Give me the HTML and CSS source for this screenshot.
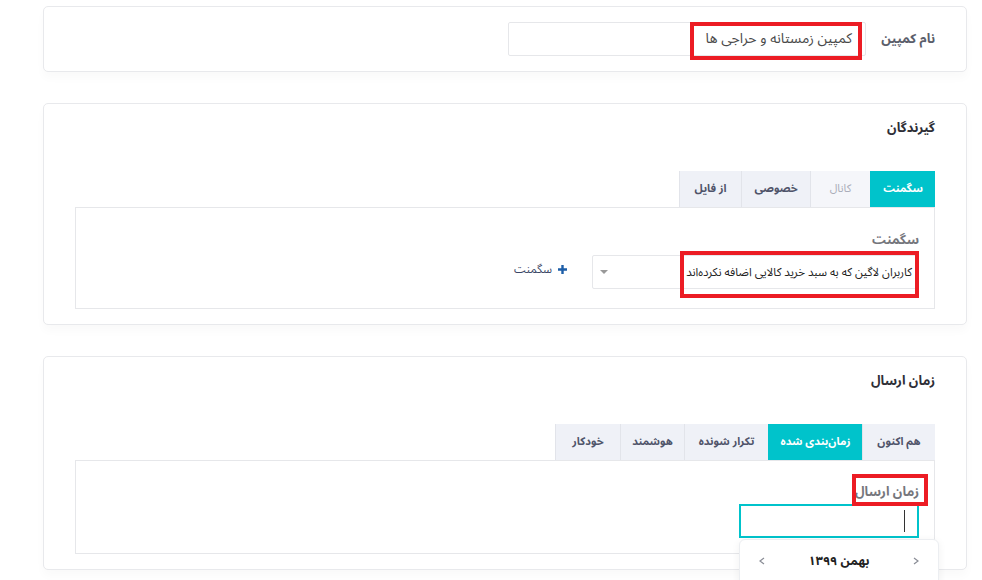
FILE: index.html
```html
<!DOCTYPE html>
<html lang="fa" dir="rtl">
<head>
<meta charset="utf-8">
<link rel="stylesheet" href="styles.css">
</head>
<body>
<div class="page">
  <section class="card card-name">
    <div class="form-row">
      <label class="row-label">نام کمپین</label>
      <div class="text-input">کمپین زمستانه و حراجی ها</div>
    </div>
  </section>

  <section class="card">
    <h3 class="card-title">گیرندگان</h3>
    <div class="tabs">
      <div class="tab active w65">سگمنت</div>
      <div class="tab disabled w60">کانال</div>
      <div class="tab w69">خصوصی</div>
      <div class="tab w62">از فایل</div>
    </div>
    <div class="panel">
      <div class="field-label">سگمنت</div>
      <div class="select-row">
        <div class="select">
          <span class="select-text">کاربران لاگین که به سبد خرید کالایی اضافه نکرده‌اند</span>
          <span class="caret"></span>
        </div>
        <a class="add-link"><span class="plus">
          <svg width="9" height="9" viewBox="0 0 9 9"><path d="M3.3 0h2.4v3.3H9v2.4H5.7V9H3.3V5.7H0V3.3h3.3z" fill="#1d5ea8"/></svg>
        </span>سگمنت</a>
      </div>
    </div>
  </section>

  <section class="card card-time">
    <h3 class="card-title">زمان ارسال</h3>
    <div class="tabs">
      <div class="tab w73">هم اکنون</div>
      <div class="tab active w94">زمان‌بندی شده</div>
      <div class="tab w84">تکرار شونده</div>
      <div class="tab w64">هوشمند</div>
      <div class="tab w65">خودکار</div>
    </div>
    <div class="panel">
      <div class="field-label">زمان ارسال</div>
      <div class="date-wrap">
        <div class="date-input"><span class="text-caret"></span></div>
        <div class="datepicker">
          <div class="dp-head">
            <svg class="dp-nav" width="6" height="8" viewBox="0 0 6 8"><path d="M1 1l4 3-4 3" fill="none" stroke="#8a8d96" stroke-width="1.2"/></svg>
            <span class="dp-title">بهمن ۱۳۹۹</span>
            <svg class="dp-nav" width="6" height="8" viewBox="0 0 6 8"><path d="M5 1L1 4l4 3" fill="none" stroke="#8a8d96" stroke-width="1.2"/></svg>
          </div>
        </div>
      </div>
    </div>
  </section>

  <div class="mark mark-1"></div>
  <div class="mark mark-2"></div>
  <div class="mark mark-3"></div>
</div>
</body>
</html>
```

FILE: styles.css
```css
* { box-sizing: border-box; }
html, body { margin: 0; padding: 0; background: #fff; overflow: hidden; }
body {
  font-family: "Noto Sans Arabic", "DejaVu Sans", sans-serif;
  color: #333;
  width: 982px;
  height: 580px;
}
.page {
  position: relative;
  padding: 6px 15px 0 43px;
}
.card {
  background: #fff;
  border: 1px solid #e8e9ec;
  border-radius: 5px;
  box-shadow: 0 6px 10px rgba(0, 0, 0, 0.025);
  padding: 14px 31px 15px 31px;
  margin-bottom: 31px;
}
.card-name { padding: 15px 31px 15px; }
.form-row {
  display: flex;
  align-items: center;
}
.row-label {
  width: 69px;
  font-size: 13px;
  font-weight: bold;
  color: #5b5e6b;
  line-height: 20px;
}
.text-input {
  width: 358px;
  height: 34px;
  border: 1px solid #e6e7ea;
  border-radius: 2px;
  padding: 0 13px;
  font-size: 14px;
  line-height: 32px;
  color: #4a4a4a;
  white-space: nowrap;
}
.card-title {
  margin: 0 0 33px;
  font-size: 13px;
  font-weight: bold;
  line-height: 20px;
  color: #2e2e36;
}
.tabs {
  display: flex;
  height: 36px;
}
.tab {
  background: #eff1f7;
  border-left: 1px solid #e2e4ea;
  font-size: 11px;
  font-weight: bold;
  color: #50546a;
  line-height: 36px;
  text-align: center;
  white-space: nowrap;
}
.w60 { width: 60px; }
.w62 { width: 62px; }
.w64 { width: 64px; }
.w65 { width: 65px; }
.w69 { width: 69px; }
.w73 { width: 73px; }
.w84 { width: 84px; }
.w94 { width: 94px; }
.tab.active {
  background: #00c3cb;
  color: #fff;
  border-left-color: #00c3cb;
}
.tab.disabled {
  background: #f5f6fa;
  color: #a9acb8;
  font-weight: normal;
}
.panel {
  border: 1px solid #e6e7ea;
  padding: 22px 15px 19px;
}
.field-label {
  font-size: 13px;
  font-weight: bold;
  color: #75767c;
  line-height: 20px;
  margin-bottom: 5px;
}
.select-row {
  display: flex;
  align-items: center;
}
.select {
  width: 327px;
  height: 34px;
  border: 1px solid #e6e7ea;
  border-radius: 2px;
  display: flex;
  align-items: center;
  justify-content: space-between;
  padding: 0 6px 0 7px;
}
.select-text {
  font-size: 11.5px;
  color: #222;
  white-space: nowrap;
}
.caret {
  width: 0;
  height: 0;
  border-left: 4px solid transparent;
  border-right: 4px solid transparent;
  border-top: 4px solid #999;
}
.add-link {
  margin-right: 25px;
  display: flex;
  align-items: center;
  gap: 6px;
  font-size: 11.5px;
  color: #3a4766;
  line-height: 16px;
  margin-top: -6px;
}
.plus { display: flex; }
.card-time .panel { padding: 21px 15px 15px; }
.card-time .field-label { margin-bottom: 2px; }
.date-wrap {
  position: relative;
  width: 180px;
}
.date-input {
  height: 34px;
  border: 2px solid #00c3cb;
  display: flex;
  align-items: center;
  padding-right: 12px;
}
.text-caret {
  display: block;
  width: 1px;
  height: 22px;
  background: #333;
}
.datepicker {
  position: absolute;
  top: 35px;
  left: 0;
  width: 200px;
  height: 60px;
  background: #fff;
  border: 1px solid #eceef1;
  border-radius: 6px;
  box-shadow: 0 2px 8px rgba(0, 0, 0, 0.06);
  z-index: 2;
}
.dp-head {
  display: flex;
  justify-content: space-between;
  align-items: center;
  height: 42px;
  padding: 0 19px 0 19px;
}
.dp-nav { display: block; }
.dp-title {
  font-size: 12.5px;
  font-weight: bold;
  color: #222;
}
.mark {
  position: absolute;
  border: 4px solid #ec1c24;
  pointer-events: none;
}
.mark-1 { left: 690px; top: 22px; width: 172px; height: 38px; }
.mark-2 { left: 680px; top: 251px; width: 239px; height: 47px; }
.mark-3 { left: 852px; top: 474px; width: 76px; height: 32px; }
```
